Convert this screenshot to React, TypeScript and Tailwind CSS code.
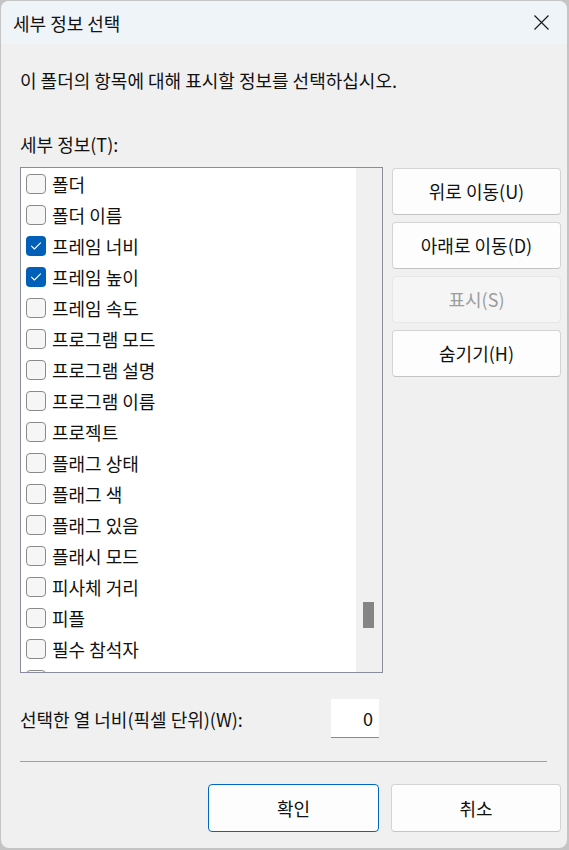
import React from 'react'

const FONT = { fontFamily: '"Noto Sans CJK KR", "Noto Sans", sans-serif' }

const ITEMS: { label: string; checked?: boolean }[] = [
  { label: '폴더' },
  { label: '폴더 이름' },
  { label: '프레임 너비', checked: true },
  { label: '프레임 높이', checked: true },
  { label: '프레임 속도' },
  { label: '프로그램 모드' },
  { label: '프로그램 설명' },
  { label: '프로그램 이름' },
  { label: '프로젝트' },
  { label: '플래그 상태' },
  { label: '플래그 색' },
  { label: '플래그 있음' },
  { label: '플래시 모드' },
  { label: '피사체 거리' },
  { label: '피플' },
  { label: '필수 참석자' },
  { label: '하위 제목' },
]

function Checkbox({ checked }: { checked?: boolean }) {
  if (checked) {
    return (
      <span className="w-[20px] h-[20px] rounded-[4px] bg-[#005fb8] flex items-center justify-center flex-shrink-0">
        <svg width="12" height="10" viewBox="0 0 12 10" fill="none">
          <path d="M1.5 5.2 L4.4 8 L10.5 1.8" stroke="white" strokeWidth="1.1" strokeLinecap="round" strokeLinejoin="round" />
        </svg>
      </span>
    )
  }
  return <span className="w-[20px] h-[20px] rounded-[4px] border border-[#8a8a8a] bg-[#f6f6f6] flex-shrink-0" />
}

function SideButton({ label, disabled }: { label: string; disabled?: boolean }) {
  return (
    <button
      className={`w-[169px] h-[47px] rounded-[4px] border text-[18px] flex items-center justify-center ${
        disabled
          ? 'bg-[#f5f5f5] border-[#e6e6e6] text-[#9d9d9d]'
          : 'bg-[#fdfdfd] border-[#d4d4d4] border-b-[#c4c4c4] text-[#111]'
      }`}
    >
      {label}
    </button>
  )
}

export default function App() {
  return (
    <div className="w-[569px] h-[850px] bg-[#c4c4c4] pt-px pl-px overflow-hidden" style={FONT}>
      <div className="w-[566px] h-[847px] rounded-[8px] overflow-hidden bg-[#f0f0f0] flex flex-col text-[#111]">
        {/* Title bar */}
        <div className="h-[43px] bg-[#eff4f9] flex items-center justify-between pl-[12px] pr-[18px] flex-shrink-0">
          <span className="text-[18px] leading-[24px]">세부 정보 선택</span>
          <svg width="15" height="15" viewBox="0 0 15 15">
            <path d="M0.5 0.5 L14.5 14.5 M14.5 0.5 L0.5 14.5" stroke="#1a1a1a" strokeWidth="1.2" />
          </svg>
        </div>

        {/* Body */}
        <div className="pl-[19px] flex flex-col">
          <p className="mt-[24px] text-[18px] leading-[24px]">이 폴더의 항목에 대해 표시할 정보를 선택하십시오.</p>
          <p className="mt-[40px] text-[18px] leading-[24px]">세부 정보(T):</p>

          <div className="mt-[11px] flex gap-[9px]">
            <div className="w-[363px] h-[506px] border border-[#898c9c] bg-white flex overflow-hidden">
              <div className="flex-1 flex flex-col overflow-hidden">
                {ITEMS.map((it) => (
                  <div key={it.label} className="h-[31px] flex-shrink-0 flex items-center gap-[6px] pl-[5px]">
                    <Checkbox checked={it.checked} />
                    <span className="text-[18px] leading-[24px]">{it.label}</span>
                  </div>
                ))}
              </div>
              <div className="w-[26px] bg-[#f0f0f0] relative flex-shrink-0">
                <div className="absolute left-[7px] top-[434px] w-[11px] h-[26px] bg-[#858585]" />
              </div>
            </div>

            <div className="mt-px flex flex-col gap-[7px]">
              <SideButton label="위로 이동(U)" />
              <SideButton label="아래로 이동(D)" />
              <SideButton label="표시(S)" disabled />
              <SideButton label="숨기기(H)" />
            </div>
          </div>

          <div className="mt-[26px] w-[359px] flex items-center justify-between">
            <span className="text-[18px] leading-[24px]">선택한 열 너비(픽셀 단위)(W):</span>
            <div className="w-[48px] h-[39px] bg-white border-b border-[#8a8a8a] flex items-center justify-end pr-[6px] text-[18px]">
              0
            </div>
          </div>

          <div className="mt-[23px] w-[527px] h-px bg-[#a0a0a0]" />

          <div className="mt-[22px] flex gap-[12px] pl-[188px]">
            <button className="w-[171px] h-[48px] rounded-[4px] border border-[#0067c0] bg-[#fdfdfd] text-[18px] flex items-center justify-center">
              확인
            </button>
            <button className="w-[170px] h-[48px] rounded-[4px] border border-[#d4d4d4] border-b-[#c4c4c4] bg-[#fdfdfd] text-[18px] flex items-center justify-center">
              취소
            </button>
          </div>
        </div>
      </div>
    </div>
  )
}
